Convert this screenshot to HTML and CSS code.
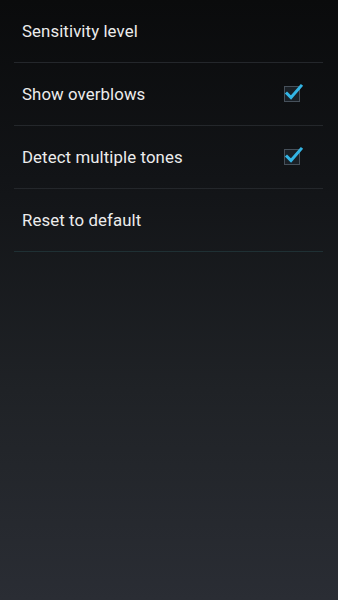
FILE: index.html
```html
<!DOCTYPE html>
<html>
<head>
<meta charset="utf-8">
<link rel="stylesheet" href="styles.css">
</head>
<body>
<div class="list">
  <div class="row"><span class="label">Sensitivity level</span></div>
  <div class="row"><span class="label">Show overblows</span>
    <span class="check"><svg width="24" height="24" viewBox="0 0 24 24"><rect x="4.5" y="6.5" width="15" height="15" fill="#1a2026" stroke="#46505a" stroke-width="1"/><path d="M7 13.5 L11 17.5 L21 6" fill="none" stroke="#33b5e5" stroke-width="3" stroke-linecap="square"/></svg></span>
  </div>
  <div class="row"><span class="label">Detect multiple tones</span>
    <span class="check"><svg width="24" height="24" viewBox="0 0 24 24"><rect x="4.5" y="6.5" width="15" height="15" fill="#1a2026" stroke="#46505a" stroke-width="1"/><path d="M7 13.5 L11 17.5 L21 6" fill="none" stroke="#33b5e5" stroke-width="3" stroke-linecap="square"/></svg></span>
  </div>
  <div class="row last"><span class="label">Reset to default</span></div>
</div>
</body>
</html>
```
FILE: styles.css
```css
html, body {
  margin: 0;
  padding: 0;
  height: 100%;
}
body {
  background: linear-gradient(to bottom, #0a0b0c 0%, #121417 30%, #1f2226 65%, #2a2d34 100%);
  font-family: Roboto, "Noto Sans", sans-serif;
  color: #ececec;
  width: 338px;
  height: 600px;
  overflow: hidden;
}
.list {
  padding: 0 15px 0 14px;
}
.row {
  height: 62px;
  border-bottom: 1px solid #24272b;
  display: flex;
  align-items: center;
  justify-content: space-between;
  padding-left: 8px;
}
.row.last {
  border-bottom-color: #1f3034;
}
.label {
  font-size: 16.8px;
  letter-spacing: 0.1px;
}
.check {
  display: flex;
  margin-right: 19px;
  margin-top: -4px;
}
```
